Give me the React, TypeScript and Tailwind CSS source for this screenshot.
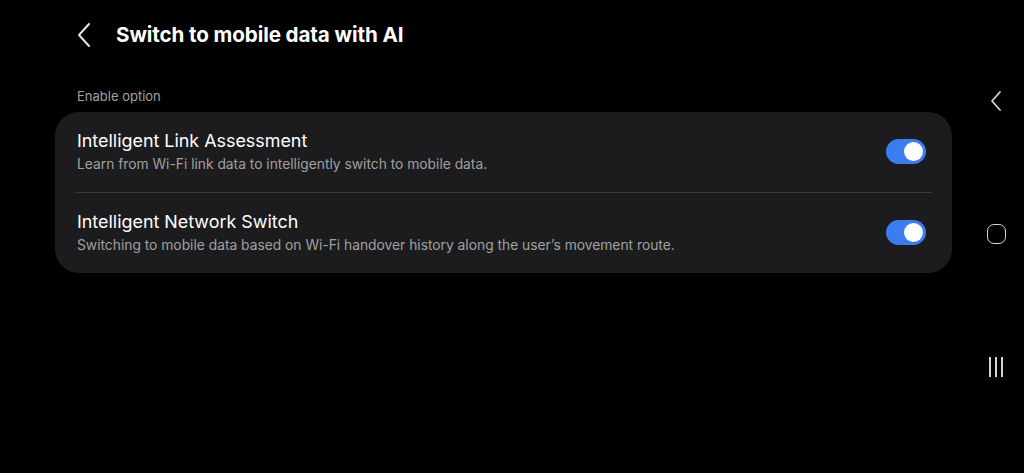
import React from "react"

const rows = [
  {
    title: "Intelligent Link Assessment",
    desc: "Learn from Wi-Fi link data to intelligently switch to mobile data.",
  },
  {
    title: "Intelligent Network Switch",
    desc: "Switching to mobile data based on Wi-Fi handover history along the user\u2019s movement route.",
  },
]

function Toggle() {
  return (
    <div className="w-[40px] h-[25px] rounded-full bg-[#3b7cf0] flex items-center justify-end pr-[3px]">
      <div className="w-[19px] h-[19px] rounded-full bg-white" />
    </div>
  )
}

export default function App() {
  return (
    <div className="w-[1024px] h-[473px] bg-black flex font-['Inter',sans-serif] text-white overflow-hidden">
      {/* Main content */}
      <div className="flex-1 pl-[55px] pr-[12px]">
        <div className="flex items-center h-[70px] pl-[22px]">
          <svg width="16" height="26" viewBox="0 0 16 26" fill="none" className="mr-[23px]">
            <path d="M12 2 L2 13 L12 24" stroke="#e5e5e5" strokeWidth="2" strokeLinecap="round" strokeLinejoin="round" />
          </svg>
          <h1 className="text-[20.6px] font-bold tracking-[-0.1px]">Switch to mobile data with AI</h1>
        </div>

        <div className="pl-[22px] pt-[17px] pb-[5px] text-[13px] text-[#a3a3a3]">Enable option</div>

        <div className="bg-[#1c1c1e] rounded-[24px] px-[20px] w-[897px]">
          {rows.map((row, i) => (
            <div key={i}>
              {i > 0 && <div className="h-px bg-[#3a3a3c]" />}
              <div className="flex items-center justify-between h-[80px] pl-[2px] pr-[6px]">
                <div className="flex flex-col">
                  <span className="text-[17.9px] leading-[24px]">{row.title}</span>
                  <span className="text-[13.8px] leading-[20px] mt-[1px] text-[#a0a0a0]">{row.desc}</span>
                </div>
                <Toggle />
              </div>
            </div>
          ))}
        </div>
      </div>

      {/* Navigation bar */}
      <div className="w-[64px] relative">
        <svg width="14" height="22" viewBox="0 0 14 22" fill="none" className="absolute left-[25px] top-[90px]">
          <path d="M11 2 L3 11 L11 20" stroke="#d4d4d4" strokeWidth="1.8" strokeLinecap="round" strokeLinejoin="round" />
        </svg>
        <div className="absolute left-[23px] top-[224px] w-[19px] h-[20px] rounded-[7px] border-[1.8px] border-[#d4d4d4]" />
        <div className="absolute left-[25px] top-[357px] flex gap-[4px]">
          <div className="w-[2px] h-[20px] bg-[#d4d4d4]" />
          <div className="w-[2px] h-[20px] bg-[#d4d4d4]" />
          <div className="w-[2px] h-[20px] bg-[#d4d4d4]" />
        </div>
      </div>
    </div>
  )
}
